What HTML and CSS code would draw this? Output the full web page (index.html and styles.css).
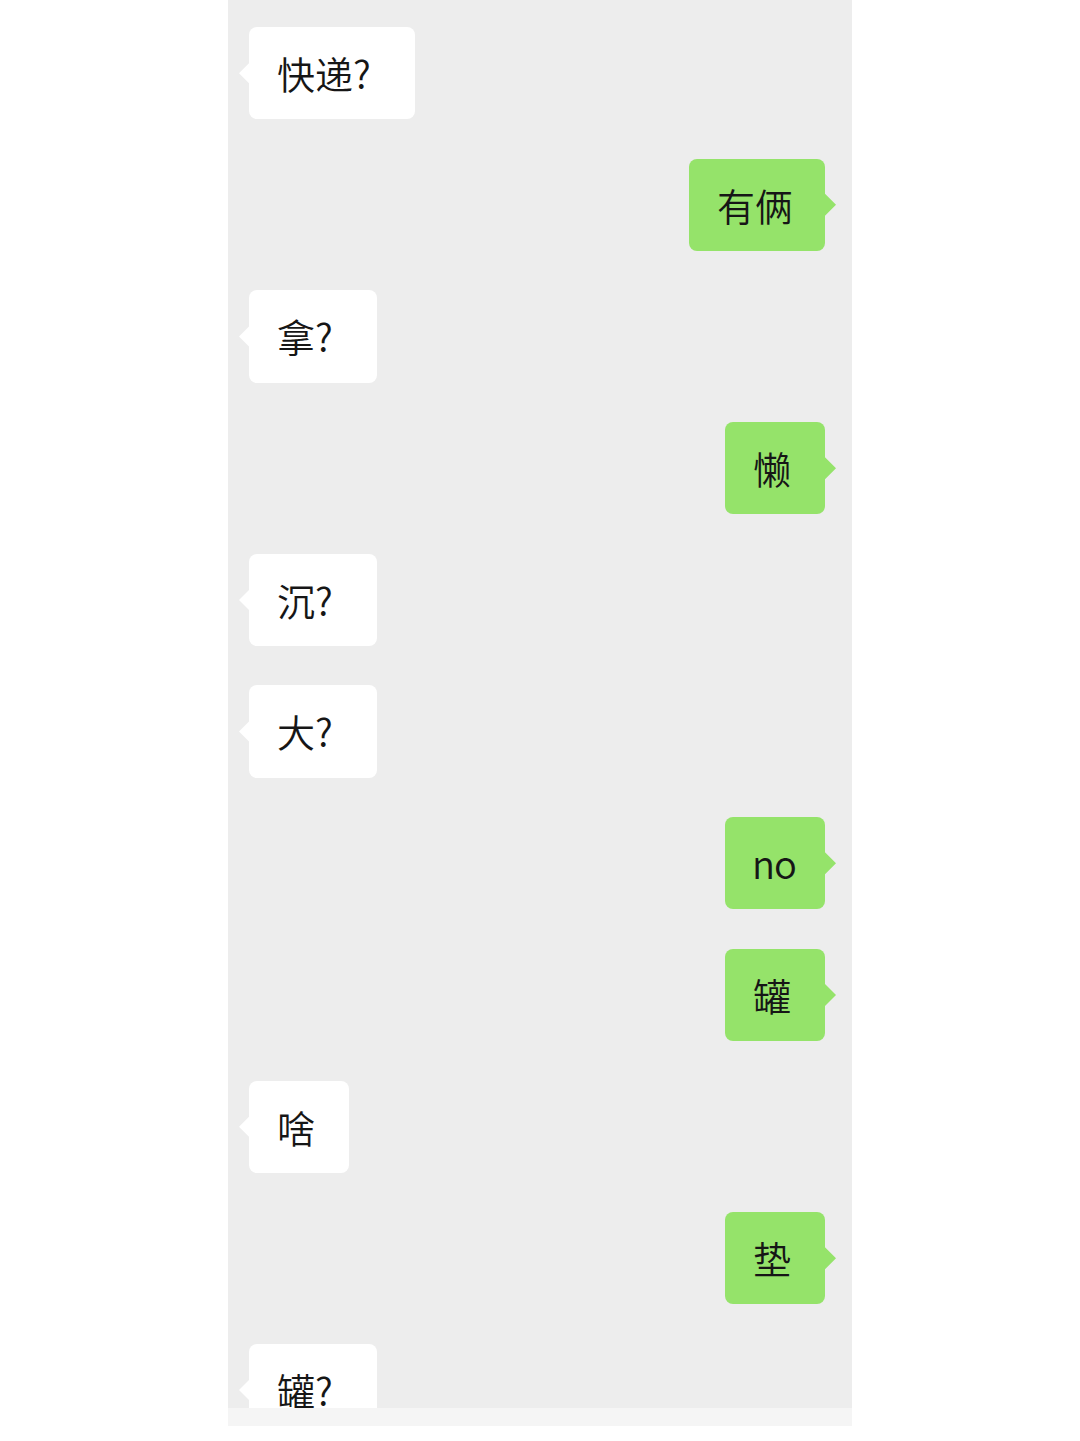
FILE: index.html
```html
<!DOCTYPE html>
<html lang="zh-CN">
<head>
<meta charset="utf-8">
<title>Chat</title>
<link rel="stylesheet" href="styles.css">
</head>
<body>
<div class="page">
  <div class="chat">
    <div class="msg left"><div class="bubble">快递<span class="q">?</span></div></div>
    <div class="msg right"><div class="bubble">有俩</div></div>
    <div class="msg left"><div class="bubble">拿<span class="q">?</span></div></div>
    <div class="msg right"><div class="bubble">懒</div></div>
    <div class="msg left"><div class="bubble">沉<span class="q">?</span></div></div>
    <div class="msg left"><div class="bubble">大<span class="q">?</span></div></div>
    <div class="msg right"><div class="bubble latin">no</div></div>
    <div class="msg right"><div class="bubble">罐</div></div>
    <div class="msg left"><div class="bubble">啥</div></div>
    <div class="msg right"><div class="bubble">垫</div></div>
    <div class="msg left"><div class="bubble">罐<span class="q">?</span></div></div>
  </div>
  <div class="band"></div>
</div>
</body>
</html>
```

FILE: styles.css
```css
html, body {
  margin: 0;
  padding: 0;
  background: #ffffff;
}

.page {
  width: 1080px;
  height: 1441px;
  overflow: hidden;
  background: #ffffff;
}

.chat {
  margin-left: 228px;
  width: 624px;
  height: 1408px;
  box-sizing: border-box;
  padding: 27px 27px 0 21px;
  background: #ededed;
  overflow: hidden;
  display: flex;
  flex-direction: column;
  gap: 39.4px;
}

.band {
  margin-left: 228px;
  width: 624px;
  height: 18px;
  background: #f5f5f5;
}

.msg {
  display: flex;
  flex-shrink: 0;
}

.msg.left {
  justify-content: flex-start;
}

.msg.right {
  justify-content: flex-end;
}

.bubble {
  position: relative;
  height: 92.3px;
  min-width: 100px;
  box-sizing: border-box;
  padding: 0 32px 0 28px;
  border-radius: 8px;
  font-family: "Noto Sans CJK SC", "Noto Sans", sans-serif;
  font-weight: 350;
  font-size: 38px;
  line-height: 92.3px;
  color: #161616;
  text-align: left;
  white-space: nowrap;
}

.bubble.latin {
  padding: 0 26px 0 27px;
  letter-spacing: -1px;
}

.q {
  display: inline-block;
  width: 30px;
  text-align: left;
}

.left .bubble {
  background: #ffffff;
}

.right .bubble {
  background: #95e36a;
}

.bubble::before {
  content: "";
  position: absolute;
  top: 50%;
  width: 12px;
  height: 24px;
  margin-top: -12px;
}

.left .bubble::before {
  left: -10px;
  background: #ffffff;
  clip-path: polygon(100% 0, 0 50%, 100% 100%);
}

.right .bubble::before {
  right: -11px;
  background: #95e36a;
  clip-path: polygon(0 0, 100% 50%, 0 100%);
}
```
